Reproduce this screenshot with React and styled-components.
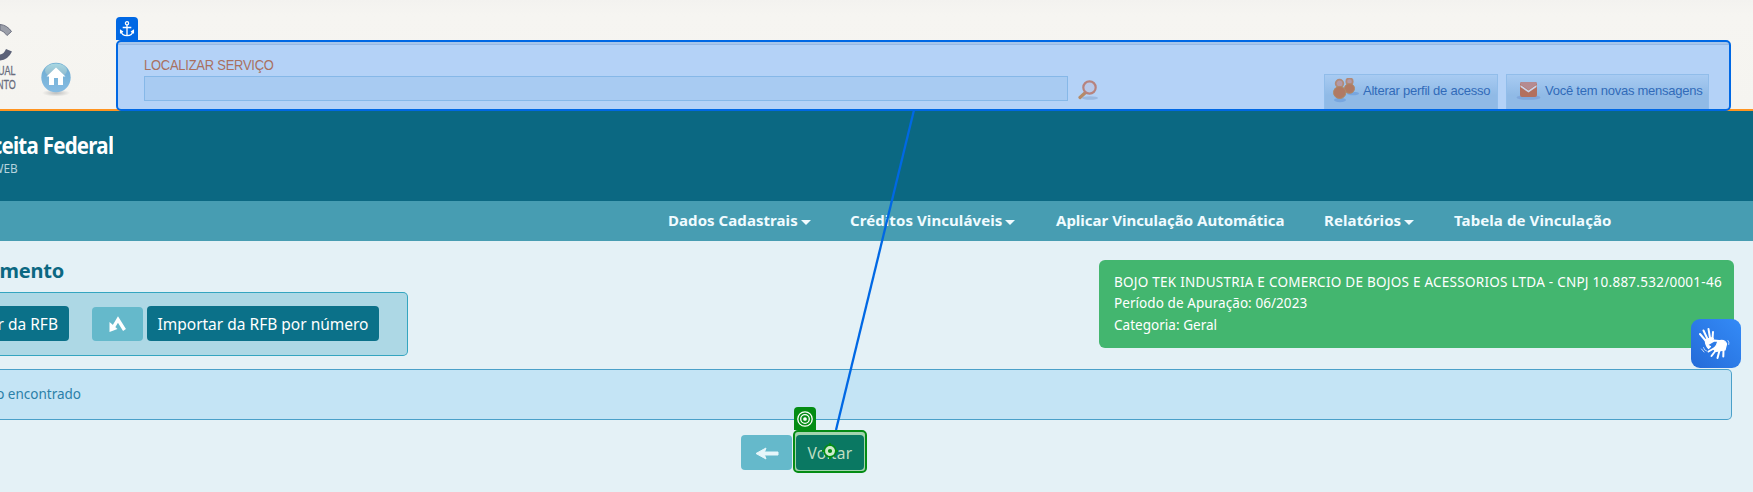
import React from "react";
import styled, { createGlobalStyle, css } from "styled-components";

const Global = createGlobalStyle`
  * { box-sizing: border-box; }
  body { margin: 0; background: #e4f1f6; overflow: hidden; font-family: "Noto Sans", sans-serif; }
`;
const Page = styled.div`
  position: relative; width: 1753px; height: 492px; overflow: hidden;
  display: flex; flex-direction: column;
`;
const Line = styled.span`
  display: inline-block; white-space: nowrap; flex: none; color: ${p => p.$color || "inherit"};
  font-size: ${p => p.$size}px; font-weight: ${p => p.$weight || 400};
  letter-spacing: ${p => p.$track || 0}px; line-height: ${p => p.$lh || 20}px;
`;
const LogoLine = styled(Line)`transform: scaleX(.91); transform-origin: right;`;
const TopBar = styled.header`
  height: 111px; flex: none; display: flex; background: linear-gradient(#f3f2ef, #f6f5f1 15px, #f5f4f0);
  border-bottom: 2px solid #ff9420;
`;
const Brand = styled.div`
  width: 41px; flex: none; display: flex; flex-direction: column; align-items: flex-start; padding-top: 23px;
  font: 12.5px/14px "Liberation Sans", sans-serif; color: #686c7c; -webkit-text-stroke: .3px #686c7c;
  svg { display: block; margin-bottom: 1px; }
`;
const BrandText = styled.span`
  width: 16px; white-space: nowrap; overflow: hidden; display: flex; justify-content: flex-end;
  span { flex: none; transform: scaleX(.72); transform-origin: right; }
`;
const Home = styled.div`width: 75px; flex: none; padding-top: 62px;`;
const ServicePanel = styled.section`
  width: 1615px; height: 71px; margin-top: 40px; flex: none; display: flex; position: relative; z-index: 3;
  border: 2px solid #0068e4; border-radius: 5px;
  background: linear-gradient(#a8c6ea 0 2px, #99b9e3 2px 3px, #b4d2f7 3px);
  font-family: "Liberation Sans", Arial, sans-serif;
`;
const Tag = styled.div`
  position: absolute; z-index: 4; left: ${p => p.$x}px; top: ${p => p.$y}px; width: 22px; height: 23px;
  background: ${p => p.$color}; border-radius: 4px 4px 0 0; display: flex; align-items: center; justify-content: center;
`;
const Search = styled.div`width: 924px; margin: 13px 0 0 26px; flex: none;`;
const SearchLabel = styled.label`
  display: block; width: 200px; font-size: 14px; line-height: 20px; height: 21px; color: #a9705f;
  letter-spacing: -.25px; white-space: nowrap; transform: scaleX(.925); transform-origin: left;
`;
const SearchField = styled.div`height: 25px; background: #a8cbf2; border: 1px solid #86b8e8;`;
const SearchIcon = styled.div`width: 24px; margin: 38px 0 0 10px; flex: none;`;
const Actions = styled.div`margin-left: 222px; display: flex; gap: 8px; padding-top: 32px;`;
const Action = styled.div`
  width: ${p => p.$w}px; height: 35px; display: flex; align-items: center; padding: 0 0 3px ${p => p.$pad}px;
  background: linear-gradient(#a8cbf2, #90bae6 60%); border: 1px solid #91bdea; border-bottom: 0;
  color: #316bb9; font-size: 13px; gap: ${p => p.$gap}px;
  letter-spacing: -.24px; white-space: nowrap;
  svg { flex: none; }
`;
const Banner = styled.div`
  height: 90px; flex: none; background: #0b6882; padding-top: 20px;
  display: flex; flex-direction: column; align-items: flex-start;
`;
const Clip = styled.div`
  width: ${p => p.$w}px; display: flex; justify-content: flex-end; overflow: hidden;
`;
const Nav = styled.nav`
  height: 40px; flex: none; background: #479db2; color: #f0fbff; display: flex; align-items: center;
  padding: 0 0 2px 668px;
`;
const NavItem = styled.div`
  width: ${p => p.$w}px; flex: none; display: flex; align-items: center; gap: ${p => p.$gap || 3}px;
`;
const Caret = styled.i`
  border: 5px solid transparent; border-top-color: #f0fbff; border-bottom: 0; margin-top: 5px;
`;
const Body = styled.main`flex: 1; background: #e4f1f6;`;
const Head = styled.div`display: flex; height: 128px; justify-content: space-between; padding-right: 19px;`;
const Title = styled.h1`
  margin: 0; padding-top: 15px; height: 51px; color: #0b6882; font-size: 20px; line-height: 30px;
`;
const ImportBox = styled.div`
  width: 408px; height: 64px; background: #add8e5; border: 1px solid #34a5c0; border-left: 0;
  border-radius: 0 5px 5px 0; display: flex; padding-top: 13px;
`;
const buttonBase = css`display: flex; align-items: center; justify-content: center; flex: none; border-radius: 4px;`;
const Button = styled.button`
  ${buttonBase} border: 0; padding: 0; width: ${p => p.$w}px; height: 35px; color: #fff; background: #0b7189;
  font-family: inherit;
  ${p => p.$cut && "border-radius: 0 4px 4px 0; justify-content: flex-end; padding-right: 11px; overflow: hidden;"}
`;
const IconTile = styled.div`
  ${buttonBase} width: 51px; height: ${p => p.$h}px; background: #65b9cb; margin: ${p => p.$m};
`;
const Info = styled.aside`
  width: 635px; height: 88px; margin-top: 19px; padding: 11px 0 0 15px; color: #fff; background: #43b66f;
  border-radius: 6px; display: flex; flex-direction: column;
`;
const Notice = styled.div`
  width: 1732px; height: 51px; background: #c4e4f5; border: 1px solid #4aa0c9; border-left: 0;
  border-radius: 0 5px 5px 0; display: flex; align-items: center; padding-bottom: 1px; color: #2b80a8;
`;
const Footer = styled.div`display: flex; padding: 11px 0 0 741px;`;
const Target = styled.div`
  width: 74px; height: 43px; border: 2px solid #048c14; border-radius: 5px; background: #a2d4ae;
  padding: 3px 1px 1px; margin-top: -1px;
`;
const Back = styled.div`
  ${buttonBase} height: 35px; background: #0a7862; color: #c0dfc2; position: relative;
`;
const Marker = styled.svg`position: absolute; left: 25px; top: 7px;`;
const Libras = styled.div`
  position: absolute; z-index: 5; left: 1691px; top: 319px; width: 50px; height: 49px; border-radius: 9px;
  background: linear-gradient(45deg, #246bd8, #348bf7);
`;
const Connector = styled.svg`position: absolute; z-index: 3; left: 0; top: 0; pointer-events: none;`;

const Bullseye = () => (
  <svg width="18" height="18" viewBox="0 0 18 18" fill="none" stroke="#fff" strokeWidth="1.3">
    <circle cx="9" cy="9" r="7.2" /><circle cx="9" cy="9" r="4.3" /><circle cx="9" cy="9" r="1.2" fill="#fff" />
  </svg>
);
const Anchor = () => (
  <svg width="16" height="18" viewBox="0 0 16 18" fill="none" stroke="#fff" strokeWidth="1.3">
    <circle cx="8" cy="3.3" r="1.6" />
    <path d="M8 5v11M3.700 7.500h8.600M2 11c.8 6.200 11.200 6.200 12 0M1.600 13.500V10.500L4 12M14.400 13.500V10.500L12 12" />
  </svg>
);
const HomeIcon = () => (
  <svg width="30" height="35" viewBox="0 0 30 35">
    <defs>
      <linearGradient id="hb" x1="0" y1="0" x2="0" y2="1">
        <stop offset="0" stopColor="#6cabd0" /><stop offset="1" stopColor="#86bce3" />
      </linearGradient>
      <linearGradient id="hg" x1="0" y1="0" x2="0" y2="1">
        <stop offset="0" stopColor="#a9d8e2" /><stop offset="1" stopColor="#8cb5cb" />
      </linearGradient>
      <radialGradient id="hs"><stop offset="0" stopColor="#bcbdbc" /><stop offset="1" stopColor="#f5f4f0" /></radialGradient>
    </defs>
    <ellipse cx="15" cy="31" rx="14" ry="3.5" fill="url(#hs)" />
    <circle cx="15" cy="15.5" r="14.7" fill="url(#hb)" />
    <ellipse cx="15" cy="8.5" rx="11" ry="7" fill="url(#hg)" />
    <path d="M15 5.500l9.500 9H22V23h-5v-7h-4v7H8v-8.500H5.500z" fill="#fff" />
  </svg>
);
const Magnifier = () => (
  <svg width="22" height="22" viewBox="0 0 22 22" fill="none">
    <ellipse cx="12" cy="18" rx="8" ry="1.8" fill="#9bb9e0" />
    <path d="M7.500 12.500L2 17.500" stroke="#b58a68" strokeWidth="3.2" strokeLinecap="round" />
    <circle cx="11.5" cy="7.5" r="6.2" fill="#b8c9ea" stroke="#b7837e" strokeWidth="2.2" />
  </svg>
);
const People = () => (
  <svg width="27" height="25" viewBox="0 0 27 25">
    <ellipse cx="7" cy="22" rx="6" ry="2.2" fill="#77a6df" /><ellipse cx="20" cy="15.5" rx="6" ry="1.8" fill="#77a6df" />
    <g fill="#b29aa8" stroke="#b28a78" strokeWidth="1.8"><circle cx="16.500" cy="3.500" r="3.200" /><circle cx="6.500" cy="5.500" r="3.800" /></g>
    <g fill="#b07a64" stroke="#ae8a68"><ellipse cx="16.5" cy="10.500" rx="5" ry="4.800" /><ellipse cx="6.700" cy="14.500" rx="6.200" ry="6" /></g>
  </svg>
);
const Mail = () => (
  <svg width="25" height="20" viewBox="0 0 25 20">
    <ellipse cx="12.5" cy="16.5" rx="12" ry="2.3" fill="#7fa7dc" />
    <rect x="4" y="1" width="17" height="15" rx="2" fill="#b2705f" />
    <path d="M4 3q0-2 2-2h13q2 0 2 2l-8.500 6z" fill="#b58b91" />
    <path d="M4.500 4l8 5.500 8-5.500v2l-8 5.500-8-5.500z" fill="#cbd5ec" />
  </svg>
);
const Hands = () => (
  <svg width="50" height="49" viewBox="0 0 50 49" fill="none" stroke="#fff" strokeLinecap="round" strokeLinejoin="round">
    <path d="M14.500 21.500L9 15M16.500 20L12.500 11.500M19 19L17.500 10M21.500 19.500L22 13" strokeWidth="2" />
    <path d="M14.200 20.500L21.500 18.500 22.500 20 17.500 23.500 15.500 25.500 19.500 27.500 17.500 29.500Q14.500 27 14.200 20.500Z" fill="#fff" strokeWidth="1.2" />
    <path d="M16.500 25.200L23 21.500 28 22" strokeWidth="2.2" />
    <path d="M27 22Q34 20 35.500 25L34 31 25 32.500 22.500 30 25.500 26Z" fill="#fff" strokeWidth="1.2" />
    <path d="M24.500 28.500L17.500 32.500M25.500 30.500L20.500 37M28.500 31.500L26.500 39M32.500 30.500L32.300 37.500" strokeWidth="2" />
    <path d="M37 21.500q1.500 1.500.8 4M12.500 28.500q.5 3 3 3.500M10.500 30l2.500 3" strokeWidth=".7" />
  </svg>
);

export default function App() {
  return (
    <Page>
      <Global />
      <TopBar>
        <Brand>
          <svg width="16" height="40" viewBox="0 0 16 40" fill="none">
            <path d="M0 1.500Q7 2 11.500 8.500L7 12.500Q4 8 0 7z" fill="#9b9fa9" stroke="#6c7080" />
            <path d="M0 37.500Q8 37 12 28.500L6 26Q4 31 0 31.500z" fill="#5c6278" />
          </svg>
          <BrandText><span>VIRTUAL</span></BrandText>
          <BrandText><span>ATENDIMENTO</span></BrandText>
        </Brand>
        <Home><HomeIcon /></Home>
        <ServicePanel>
          <Search>
            <SearchLabel>LOCALIZAR SERVIÇO</SearchLabel>
            <SearchField />
          </Search>
          <SearchIcon><Magnifier /></SearchIcon>
          <Actions>
            <Action $w={174} $pad={8} $gap={3}><People />Alterar perfil de acesso</Action>
            <Action $w={203} $pad={9} $gap={4}><Mail />Você tem novas mensagens</Action>
          </Actions>
        </ServicePanel>
      </TopBar>
      <Banner>
        <Clip $w={113}><LogoLine $size={22.5} $weight={700} $track={-0.8} $lh={29} $color="#fff">Receita Federal</LogoLine></Clip>
        <Clip $w={18}><LogoLine $size={13} $lh={16} $color="#b4d4de">WEB</LogoLine></Clip>
      </Banner>
      <Nav>
        <NavItem $w={182}><Line $size={15} $weight={700} $track={0.06}>Dados Cadastrais</Line><Caret /></NavItem>
        <NavItem $w={206}><Line $size={15} $weight={700} $track={0.08}>Créditos Vinculáveis</Line><Caret /></NavItem>
        <NavItem $w={268}><Line $size={15} $weight={700}>Aplicar Vinculação Automática</Line></NavItem>
        <NavItem $w={130}><Line $size={15} $weight={700} $track={0.1}>Relatórios</Line><Caret /></NavItem>
        <NavItem $w={170}><Line $size={15} $weight={700} $track={0.1}>Tabela de Vinculação</Line></NavItem>
      </Nav>
      <Body>
        <Head>
          <div>
            <Title><Clip $w={64}><Line $size={20} $weight={700} $track={-0.25} $lh={30}>Documento</Line></Clip></Title>
            <ImportBox>
              <Button $w={69} $cut><Line $size={15.5}>Importar da RFB</Line></Button>
              <IconTile $h={34} $m="1px 4px 0 23px">
                <svg width="19" height="18" viewBox="0 0 19 18" fill="none" stroke="#fff">
                  <path d="M16.500 15L10 4.500 5.500 12" strokeWidth="3.4" />
                  <path d="M1.500 7v10l8-3z" fill="#fff" stroke="none" />
                </svg>
              </IconTile>
              <Button $w={232}><Line $size={15.5}>Importar da RFB por número</Line></Button>
            </ImportBox>
          </div>
          <Info>
            <Line $size={13.5} $track={0.255} $lh={22}>BOJO TEK INDUSTRIA E COMERCIO DE BOJOS E ACESSORIOS LTDA - CNPJ 10.887.532/0001-46</Line>
            <Line $size={13.5} $track={0.07} $lh={21}>Período de Apuração: 06/2023</Line>
            <Line $size={13.5} $track={0.03} $lh={22}>Categoria: Geral</Line>
          </Info>
        </Head>
        <Notice><Clip $w={81}><Line $size={13.5}>Nenhum registro encontrado</Line></Clip></Notice>
        <Footer>
          <IconTile $h={35} $m="4px 1px 0 0">
            <svg width="24" height="14" viewBox="0 0 24 14" fill="#e6f6fa" stroke="#e6f6fa" strokeLinejoin="round">
              <path d="M1 7.500l10-5.500-1.500 4H23v3H9.500l1.500 4z" />
            </svg>
          </IconTile>
          <Target>
            <Back>
              <Line $size={15.5} $track={0.3}>Voltar</Line>
              <Marker width="18" height="18" viewBox="0 0 18 18" fill="none">
                <path d="M9 1v3M9 14v3M1 9h3M14 9h3" stroke="#048c14" strokeWidth="2" />
                <circle cx="9" cy="9" r="5.8" stroke="#048c14" strokeWidth="1.8" />
                <circle cx="9" cy="9" r="3.5" fill="#048c14" stroke="#cdeccb" strokeWidth="2.8" />
              </Marker>
            </Back>
          </Target>
        </Footer>
      </Body>
      <Tag $x={116} $y={17} $color="#0068e4"><Anchor /></Tag>
      <Tag $x={794} $y={407} $color="#048c14"><Bullseye /></Tag>
      <Connector width="1753" height="492"><path d="M914 110L836 430" stroke="#0068e4" strokeWidth="2.3" /></Connector>
      <Libras><Hands /></Libras>
    </Page>
  );
}
